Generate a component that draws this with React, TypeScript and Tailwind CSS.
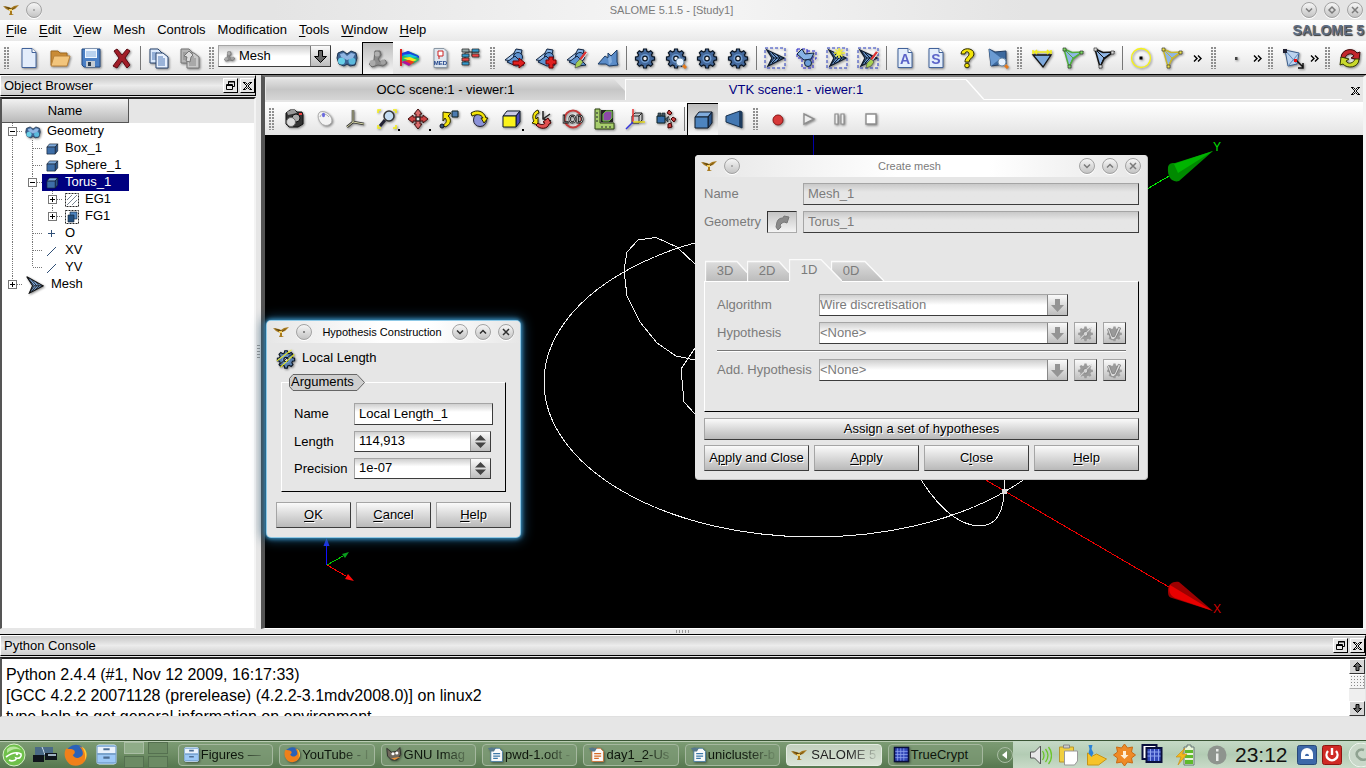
import React from "react";

type Kids = { children?: React.ReactNode };

/* ---------- shared drawing pieces ---------- */

const GEAR =
  "M9.6 2h2.8l.5 2.4 1.7.7 2.1-1.3 2 2-1.3 2.1.7 1.7 2.4.5v2.8l-2.4.5-.7 1.7 1.3 2.1-2 2-2.1-1.3-1.7.7-.5 2.4H9.600l-.5-2.400-1.700-.7-2.100 1.300-2-2 1.300-2.100-.7-1.700L1.500 12.900v-2.800l2.400-.5.7-1.700-1.300-2.100 2-2 2.100 1.300 1.700-.7z";

function Svg({ children, size = 22 }: Kids & { size?: number }) {
  return (
    <svg
      viewBox="0 0 22 22"
      width={size}
      height={size}
      aria-hidden="true"
      className="block shrink-0 drop-shadow-[1px_1px_1px_rgba(0,0,0,0.45)]"
    >
      {children}
    </svg>
  );
}

const Gear = ({ fill = "#44699c", stroke = "#0b1624" }: { fill?: string; stroke?: string }) => (
  <>
    <path d={GEAR} fill={fill} stroke={stroke} strokeWidth="1.200" />
    <circle cx="11" cy="11.500" r="4.500" fill="#6f9bd0" />
    <circle cx="11" cy="11.500" r="2.300" fill="#ececec" stroke={stroke} strokeWidth="1.200" />
  </>
);

const Pages = ({ dim = false }: { dim?: boolean }) => (
  <>
    <path d="M2 2h8l4 4v10H2z" fill={dim ? "#b5b5b5" : "#dbe9fb"} stroke={dim ? "#777" : "#28456e"} />
    <path d="M4 6h5M4 8h6M4 10h6M4 12h6" stroke={dim ? "#888" : "#4c77b4"} />
    <path d="M8 6h7l5 4v11H8z" fill={dim ? "#c9c9c9" : "#e9f1fd"} stroke={dim ? "#777" : "#28456e"} />
    <path d="M10 10h5M10 12h7M10 14h7M10 16h7M10 18h7" stroke={dim ? "#888" : "#4c77b4"} />
  </>
);

const MeshShape = () => (
  <>
    <path d="M6 14L12 2l6 1-2 9z" fill="#86b2e4" stroke="#10233f" />
    <path d="M1 13l9-7v8z" fill="#a9c9ee" stroke="#10233f" />
    <circle cx="14" cy="10" r="4.500" fill="#5f93d0" stroke="#10233f" />
    <path d="M3 15l8-6 9 9-8 1z" fill="#5f93d0" stroke="#10233f" />
  </>
);

const Dashed = () => (
  <rect x="1" y="1" width="20" height="20" fill="none" stroke="#2a3fc0" strokeDasharray="3 2" />
);

const DartMesh = () => (
  <>
    <Dashed />
    <path d="M3 3l17 8-16 8 4-8z" fill="#6c98cf" stroke="#0d1a2c" strokeWidth="1.300" />
    <path d="M4 4l6 7h10M4 19l6-8M8 6l5 5-5 5M13 8l3 3-3 3" fill="none" stroke="#0d1a2c" />
  </>
);

const Tri = ({ line, dot }: { line: string; dot: string }) => (
  <>
    <path d="M2 2l8 3.500 10-.5-9 7-4 8z" fill="#8fb6e6" stroke={line} strokeWidth="1.500" />
    <path d="M2 2l9 9 9-6M11 11l-4 9" fill="none" stroke={line} />
    <path d="M1 1h3v3H1zM18 4h3v3h-3zM6 18h3v3H6z" fill={dot} stroke="#222" strokeWidth=".6" />
  </>
);

const Cube = ({ front, top = "#7fabdc", side = "#2b5488" }: { front: string; top?: string; side?: string }) => (
  <>
    <path d="M3 8l4-5h13l-4 5z" fill={top} stroke="#111c2c" />
    <path d="M16 8l4-5v11l-4 5z" fill={side} stroke="#111c2c" />
    <path d="M3 8h13v11H3z" fill={front} stroke="#111c2c" />
  </>
);

const Brush = () => (
  <>
    <path d="M20 5l-6 8" stroke="#d33" strokeWidth="2.500" />
    <path d="M21 6l-6 8" stroke="#eee" />
    <path d="M14 12l3 3-3 4-5 2 1-5z" fill="#a6cf52" stroke="#444" strokeWidth=".6" />
  </>
);

const Lens = () => (
  <>
    <path d="M17 17l4 4" stroke="#e57a1c" strokeWidth="3" />
    <circle cx="15" cy="15" r="4" fill="#e6f2ff" stroke="#6c8ba8" />
  </>
);

const Doc = ({ letter }: { letter?: string }) => (
  <>
    <path d="M4 1.500h10l4 4v15H4z" fill="#e3edfb" stroke="#41629a" />
    <path d="M14 1.500v4h4" fill="#fff" stroke="#41629a" />
    {letter && (
      <text x="11" y="17" textAnchor="middle" fontSize="14" fontWeight="bold" fill="#5b63c8" fontFamily="Liberation Sans">
        {letter}
      </text>
    )}
  </>
);

const I: Record<string, React.ReactNode> = {
  newDoc: <Doc />,
  open: (
    <>
      <path d="M2 4h7l2 2h7v12H2z" fill="#c98b35" stroke="#a06a20" />
      <path d="M5 9h16l-3 10H2z" fill="#f2c57c" stroke="#b98138" />
    </>
  ),
  save: (
    <>
      <path d="M2 2h18v18H4l-2-2z" fill="#4a7fc4" stroke="#234b82" />
      <rect x="5" y="2" width="12" height="9" fill="#eef6ff" />
      <path d="M6 5h10M6 7h10M6 9h10" stroke="#83aee0" />
      <rect x="6" y="14" width="9" height="6" fill="#c3cbd3" />
      <rect x="8" y="15" width="3" height="4" fill="#2a3c50" />
    </>
  ),
  del: <path d="M3 4l3-2 5 6 5-6 3 2-5 7 5 7-3 3-5-7-5 7-4-2 6-8z" fill="#a11d28" stroke="#5b0a12" />,
  copy: <Pages />,
  paste: (
    <>
      <Pages dim />
      <path d="M5 9l5-5 4 4-2 2-1 5-4-1 1-4z" fill="#ddd" stroke="#777" />
    </>
  ),
  geom: (
    <>
      <path d="M2 6l5-2 4 3 4-3 5 2 1 5-2 7-5 1-3-2-3 2-5-2-2-6z" fill="#3d6494" stroke="#1d3450" />
      <circle cx="5.500" cy="14" r="3.500" fill="#69d0e8" />
      <circle cx="16" cy="14" r="3.500" fill="#5bb9dc" />
      <path d="M4 7l4-1 3 3 4-3 4 1-2 4-6 2-6-3z" fill="#8fb5e2" />
    </>
  ),
  meshMod: (
    <>
      <path d="M8 3h5l1 4-3 4 2 3 5-2 2 3-4 3-5-1-6 2-3-3 5-4z" fill="#8c8c8c" stroke="#6a6a6a" />
      <circle cx="5.500" cy="15" r="3" fill="#aaa" />
      <circle cx="16" cy="14" r="2.500" fill="#a2a2a2" />
      <circle cx="10" cy="6" r="2.500" fill="#b0b0b0" />
    </>
  ),
  post: (
    <>
      <path d="M3 2v17" stroke="#d22" strokeWidth="2" />
      <path d="M4 8l6-4 10 4 1 5-6 4-11-3z" fill="#20b96e" />
      <path d="M4 6l6-2 11 5v2L12 8 4 9z" fill="#1b3fe0" />
      <path d="M4 8l8-1 8 3-7 1z" fill="#13c7d8" />
      <path d="M5 11l7-1 7 3-5 2z" fill="#f5e81c" />
      <path d="M5 14l6-1 6 2-5 3z" fill="#ed3b1c" />
      <path d="M3 15l4-1 6 3-2 2z" fill="#b0119c" />
    </>
  ),
  med: (
    <>
      <path d="M5 1.500h10l3 3v16H5z" fill="#dfe7ef" stroke="#8b98a5" />
      <path d="M9 4h5v5H9z" fill="#fff" stroke="#c22" />
      <path d="M10 9v3" stroke="#c22" />
      <text x="11.500" y="18" textAnchor="middle" fontSize="6" fontWeight="bold" fill="#1c3f87" fontFamily="Liberation Sans">
        MED
      </text>
    </>
  ),
  tree: (
    <>
      <path d="M5 5h14M12 5v4h5M5 6v12" stroke="#222" fill="none" />
      <path d="M2 2h7v3H2z" fill="#9aa" stroke="#222" strokeWidth=".7" />
      <path d="M12 2h7v3h-7z" fill="#39c" stroke="#222" strokeWidth=".7" />
      <path d="M12 7h7v3h-7z" fill="#e44" stroke="#222" strokeWidth=".7" />
      <path d="M2 7h7v3H2z" fill="#39c" stroke="#222" strokeWidth=".7" />
      <path d="M2 11h7v3H2z" fill="#e44" stroke="#222" strokeWidth=".7" />
      <path d="M2 15h7v3H2z" fill="#39c" stroke="#222" strokeWidth=".7" />
    </>
  ),
  meshNew: (
    <>
      <MeshShape />
      <path d="M9 14h6v-3l6 5-6 5v-3H9z" fill="#e02020" stroke="#700" />
    </>
  ),
  meshAdd: (
    <>
      <MeshShape />
      <path d="M14 10h4v3h3v4h-3v4h-4v-4h-3v-4h3z" fill="#e02020" stroke="#700" />
    </>
  ),
  meshEdit: (
    <>
      <MeshShape />
      <Brush />
    </>
  ),
  meshCopy: (
    <>
      <path d="M1 17l7-8 3 2V6l3 3 6-6v12l1 3-9 1-3-2z" fill="#5b8cc8" stroke="#1c3c66" />
      <path d="M11 11l3-2 1 6-3 3z" fill="#85aedd" />
    </>
  ),
  gear: <Gear />,
  gearLens: (
    <>
      <Gear />
      <Lens />
    </>
  ),
  grp: <DartMesh />,
  grpMulti: (
    <>
      <path d="M2 2h10v9H2zM7 9h11v12H7zM12 4h9v8h-9z" fill="none" stroke="#2222cc" strokeDasharray="3 2" />
      <path d="M2 7l5-5 3 5 9-1-3 6-7 1z" fill="#86b2e4" stroke="#10233f" />
      <circle cx="13" cy="16" r="3.500" fill="#6d9ed8" stroke="#10233f" />
    </>
  ),
  grpNew: (
    <>
      <DartMesh />
      <path d="M13 1v10M8 6h11M9.500 2.500l7 7M16.500 2.500l-7 7" stroke="#f4f03a" strokeWidth="1.500" />
    </>
  ),
  grpEdit: (
    <>
      <DartMesh />
      <Brush />
    </>
  ),
  docA: <Doc letter="A" />,
  docS: <Doc letter="S" />,
  help: (
    <>
      <path d="M5 7c0-7 13-7 13 0 0 4-5 4-5 8H9c0-5 4-5 4-8 0-3-4-3-4 0z" fill="#f4e409" stroke="#2c2a00" />
      <circle cx="11" cy="18.500" r="2.300" fill="#f4e409" stroke="#2c2a00" />
    </>
  ),
  search: (
    <>
      <path d="M2 2l6 3 11-1v13l-15 2z" fill="#3d6a9f" stroke="#203c62" />
      <path d="M2 2l12 9-10 8z" fill="#6b9bd2" />
      <Lens />
    </>
  ),
  length: (
    <>
      <path d="M2 8h18l-8 12z" fill="#7ea9dd" stroke="#111" strokeWidth="1.300" />
      <path d="M2 3v4M20 3v4M2 5h18M6 3l-2 2 2 2M16 3l2 2-2 2" stroke="#f2ee1c" fill="none" strokeWidth="1.500" />
    </>
  ),
  triGreen: <Tri line="#4fae3c" dot="#7bdc60" />,
  triBlack: <Tri line="#111" dot="#ddd" />,
  node: (
    <>
      <circle cx="11" cy="11" r="9.500" fill="none" stroke="#f5f21a" strokeWidth="1.300" />
      <path d="M9.500 9.500h3v3h-3z" fill="#000" />
    </>
  ),
  triYellow: <Tri line="#c9b72c" dot="#f0e34c" />,
  dot: <path d="M10 10h2.500v3H10z" fill="#444" />,
  move: (
    <>
      <path d="M3 3l14 3-2 11-9 2z" fill="#bcd3ee" stroke="#3b5d8a" />
      <path d="M3 3l12 14M17 6L6 19" stroke="#5d86b8" />
      <path d="M1 2h4v4H1z" fill="#223" />
      <path d="M14 13l7 7M21 16v5h-5" stroke="#111" fill="none" strokeWidth="1.500" />
      <path d="M12 12h3v3h-3z" fill="#e11" />
    </>
  ),
  refresh: (
    <>
      <path d="M2 11c0-9 12-11 16-5l3-1-1 8-8-2 3-2c-2-4-8-2-9 2z" fill="#c2262b" stroke="#3d0808" />
      <path d="M20 12c0 9-12 10-16 5l-3 1 1-8 8 2-3 2c2 4 8 2 9-2z" fill="#c9d92c" stroke="#343a05" />
    </>
  ),
  camera: (
    <>
      <path d="M3 5l4-3h5l2 2h5l1 3v9l-5 3H6l-3-3z" fill="#333" stroke="#111" />
      <path d="M4 4l4-2h4l2 3-9 2z" fill="#999" />
      <circle cx="13" cy="10" r="4" fill="#aaa" stroke="#111" />
      <circle cx="8" cy="14" r="4.500" fill="#dcdcdc" stroke="#666" />
      <path d="M16 5h3v2h-3z" fill="#e44" />
    </>
  ),
  mouse: (
    <>
      <path d="M6 4c5-2 12 3 12 9-1 5-8 6-11 2C4 12 3 6 6 4z" fill="#f3f3f3" stroke="#aaa" />
      <path d="M6 9c1-4 6-4 9 0" fill="none" stroke="#aaa" />
      <ellipse cx="9.500" cy="7" rx="1.500" ry="2.200" fill="#6a6ae0" />
    </>
  ),
  triad: (
    <>
      <path d="M8 2v12l11 2M8 14l-6 5" stroke="#333" strokeWidth="2.500" fill="none" />
      <path d="M8 2v12l11 2M8 14l-6 5" stroke="#d8d8a8" fill="none" />
    </>
  ),
  zoomFit: (
    <>
      <path d="M2 5V2h3M17 2h3v3M2 17v3h3M17 20h3v-3" fill="none" stroke="#f3ee16" strokeWidth="1.500" />
      <path d="M9 12l-5 6" stroke="#223" strokeWidth="3" />
      <circle cx="13" cy="8" r="5" fill="#c4dcf2" stroke="#333" strokeWidth="1.500" />
    </>
  ),
  pan: (
    <>
      <path d="M11 1l4 5h-2v3H9V6H7zM11 21l4-5h-2v-3H9v3H7z" fill="#d86a6a" stroke="#401010" />
      <path d="M1 11l5-4v2h3v4H6v2zM21 11l-5-4v2h-3v4h3v2z" fill="#c44" stroke="#401010" />
      <circle cx="11" cy="11" r="2" fill="#eee" stroke="#222" />
    </>
  ),
  rotPoint: (
    <>
      <path d="M14 3h6v6h-6z" fill="#4a7ab0" stroke="#122" />
      <path d="M5 4l8 1-3 3c4 3 3 9-3 11l-2-2c4-2 4-5 2-7l-2 3z" fill="#f4e409" stroke="#2c2a00" />
      <circle cx="4" cy="18" r="2" fill="#357" stroke="#112" />
    </>
  ),
  rotate: (
    <>
      <circle cx="11" cy="12" r="6.500" fill="#8b92d8" stroke="#223" />
      <path d="M2 5c6-4 13-2 15 5h2l-4 5-3-5h2C12 6 8 6 3 8z" fill="#f4e409" stroke="#2c2a00" />
    </>
  ),
  yellowCube: <Cube front="#fbf31b" top="#c8c8e6" side="#4a4ab8" />,
  turn: (
    <>
      <path d="M12 3v8l8 2M12 11l7-5" stroke="#222" strokeWidth="1.500" fill="none" />
      <path d="M7 2C1 4 1 10 3 13l-2 2 6 2V9L5 11C4 8 5 6 8 5z" fill="#f4e409" stroke="#2c2a00" />
      <path d="M5 17c4 5 12 4 13-1l2-1-3-5-5 4 2 1c-1 2-5 2-7 0z" fill="#e05050" stroke="#400" />
    </>
  ),
  lod: (
    <>
      <circle cx="11" cy="11" r="8.500" fill="none" stroke="#c43b3b" strokeWidth="2" />
      <text x="11" y="15" textAnchor="middle" fontSize="10" fontWeight="bold" fill="#fff" stroke="#111" strokeWidth=".8" fontFamily="Liberation Sans">
        LOD
      </text>
    </>
  ),
  ruler: (
    <>
      <path d="M2 1h5v14h14v6H2z" fill="#a7cd6c" stroke="#2c4312" />
      <path d="M8 2h12v12H8z" fill="#222" />
      <path d="M10 6l3-3h6v7l-3 3h-6z" fill="#8b4aa8" stroke="#6c3" />
      <path d="M3 5h2M3 9h2M3 13h2M9 18v2M13 18v2M17 18v2" stroke="#223" />
    </>
  ),
  axes: (
    <>
      <path d="M8 8l3-3h7v7l-3 3H8z" fill="#ccc" stroke="#222" />
      <path d="M8 8h7v7M15 8l3-3" stroke="#222" fill="none" />
      <path d="M9 1v13" stroke="#e33" strokeWidth="1.500" />
      <path d="M9 14h12" stroke="#e6d91a" strokeWidth="1.500" />
      <path d="M9 14l-7 7" stroke="#33d" strokeWidth="1.500" />
    </>
  ),
  cam2: (
    <>
      <path d="M2 8h8v7H2z" fill="#356ca8" stroke="#122" />
      <path d="M3 5h3v3H3zM7 5h3v3H7zM10 11l3-2v5z" fill="#456" stroke="#122" strokeWidth=".6" />
      <path d="M14 2l3 3-2 2-3-2zM18 9l3 2-2 3-3-3zM13 16l3-1 1 4-4 1z" fill="#c44" stroke="#400" />
      <path d="M13 8l4 8" stroke="#222" strokeDasharray="2 1" />
    </>
  ),
  blueCube: <Cube front="#4d84bf" />,
  persp: (
    <>
      <path d="M3 8l14-5v16L3 14z" fill="#4478b2" stroke="#16304e" />
      <path d="M17 3l2 1v16l-2-1z" fill="#24466e" stroke="#16304e" />
    </>
  ),
  record: <circle cx="11" cy="12" r="5" fill="#d73939" stroke="#8b1616" />,
  play: <path d="M6 6l10 5-10 5z" fill="#eee" stroke="#8e8e8e" strokeWidth="1.400" />,
  pause: <path d="M6 6h3v10H6zM12 6h3v10h-3z" fill="#eee" stroke="#8e8e8e" strokeWidth="1.200" />,
  stop: <path d="M6 6h10v10H6z" fill="#fff" stroke="#8e8e8e" strokeWidth="1.400" />,
};

const Eagle = () => (
  <svg viewBox="0 0 16 16" width="16" height="16" aria-hidden="true" className="block shrink-0">
    <path d="M0 4l6 1 2 1 3-2 5-1-4 4-3 1v4l2 1H6l1-2V9L3 7z" fill="#a87a1e" />
    <path d="M1 4l6 2 2 1 5-3-5 4H7z" fill="#5b430f" />
    <path d="M6 7h3v2H6z" fill="#f1ce62" />
  </svg>
);

/* ---------- small controls ---------- */

function RoundBtn({ kind, dim }: { kind: "dot" | "down" | "up" | "max" | "close"; dim?: boolean }) {
  const c = dim ? "#7b7b7b" : "#2e2e2e";
  return (
    <button
      type="button"
      aria-label={kind}
      className="flex size-4 shrink-0 items-center justify-center rounded-full border border-[#a2a2a2] bg-linear-to-b from-[#f6f6f6] to-[#c4c4c4] shadow-[0_1px_0_#fff]"
    >
      <svg viewBox="0 0 10 10" width="10" height="10" fill="none" stroke={c} strokeWidth="1.500" aria-hidden="true">
        {kind === "dot" && <circle cx="5" cy="5" r=".5" strokeWidth=".8" />}
        {kind === "down" && <path d="M2 3.500l3 3 3-3" />}
        {kind === "up" && <path d="M2 6.500l3-3 3 3" />}
        {kind === "max" && <path d="M5 2l3 3-3 3-3-3z" />}
        {kind === "close" && <path d="M2 2l6 6M8 2l-6 6" />}
      </svg>
    </button>
  );
}

const Grip = () => (
  <div className="flex w-[13px] shrink-0 justify-center gap-px py-1">
    <div className="my-px w-0.5 bg-[repeating-linear-gradient(#8f8f8f_0_2px,transparent_2px_3px)]" />
    <div className="my-px w-0.5 bg-[repeating-linear-gradient(#8f8f8f_0_2px,transparent_2px_3px)]" />
  </div>
);

const Sep = () => (
  <div className="flex w-1.5 shrink-0 justify-center py-1">
    <div className="w-px bg-[#777]" />
  </div>
);

function Tool({ name, on, drop }: { name: string; on?: boolean; drop?: boolean }) {
  return (
    <button
      type="button"
      aria-label={name}
      className={
        on
          ? "relative flex w-[31px] shrink-0 items-center justify-center border-t border-l border-black bg-linear-to-b from-[#bdbdbd] to-[#f6f6f6]"
          : "relative flex w-[31px] shrink-0 items-center justify-center"
      }
    >
      <Svg>{I[name]}</Svg>
      {drop && <span className="absolute right-0.5 bottom-1 size-0.5 bg-black" />}
    </button>
  );
}

const Tools = ({ names }: { names: string[] }) => (
  <>
    {names.map((n, i) => (
      <Tool key={i} name={n} drop={["zoomFit", "pan", "yellowCube"].includes(n)} />
    ))}
  </>
);

const More = ({ wide }: { wide?: boolean }) => (
  <button
    type="button"
    aria-label="More tools"
    className={
      wide
        ? "flex w-5 shrink-0 items-center justify-center"
        : "flex w-[13px] shrink-0 items-center justify-center"
    }
  >
    <svg viewBox="0 0 9 7" width="9" height="7" fill="none" stroke="#000" strokeWidth="1.400" aria-hidden="true">
      <path d="M1 .5l3 3-3 3M5 .5l3 3-3 3" />
    </svg>
  </button>
);

const DockBtn = ({ kind, flat }: { kind: "float" | "close"; flat?: boolean }) => (
  <button
    type="button"
    aria-label={kind}
    className={
      flat
        ? "flex size-[15px] items-center justify-center"
        : "flex size-[15px] items-center justify-center border border-t-white border-r-black border-b-black border-l-white bg-[#e6e6e6]"
    }
  >
    <svg viewBox="0 0 11 11" width="11" height="11" fill="none" stroke="#000" className="shrink-0" aria-hidden="true">
      {kind === "float" ? (
        <path d="M3.500 4V1.500h6v5H7.500M3 2h7M1.500 4.500h6v5h-6zM1 5.500h7" />
      ) : (
        <path d="M1 2.500h2.500l2 2 2-2H10M1 9.500h2.500l2-2 2 2H10M2 3l3 3-3 3M9 3L6 6l3 3" />
      )}
    </svg>
  </button>
);

function DockHeader({ title }: { title: string }) {
  return (
    <div className="flex h-[21px] shrink-0 items-center gap-0.5 border border-t-white border-r-black border-b-black border-l-white bg-linear-to-b from-[#c6c6c6] via-[#ececec] to-[#cdcdcd] pl-[3px]">
      <h2 className="grow">{title}</h2>
      <DockBtn kind="float" />
      <DockBtn kind="close" />
    </div>
  );
}

const K = ({ children }: Kids) => <span className="underline underline-offset-2">{children}</span>;

function Push({ children, grow }: Kids & { grow?: boolean }) {
  return (
    <button
      type="button"
      className={
        grow
          ? "h-[26px] flex-1 border border-t-[#a5a5a5] border-r-[#3c3c3c] border-b-[#3c3c3c] border-l-[#a5a5a5] bg-linear-to-b from-[#fafafa] to-[#b9b9b9] whitespace-nowrap [text-shadow:1px_1px_0_#fff]"
          : "h-[22px] border border-t-[#a5a5a5] border-r-[#3c3c3c] border-b-[#3c3c3c] border-l-[#a5a5a5] bg-linear-to-b from-[#fafafa] to-[#b9b9b9] whitespace-nowrap [text-shadow:1px_1px_0_#fff]"
      }
    >
      {children}
    </button>
  );
}

/* ---------- tree ---------- */

type Row = { label: string; guides: string[]; icon: React.ReactNode; pad: string; sel?: boolean };

function Guide({ kind }: { kind: string }) {
  const up = kind.includes("u");
  const down = kind.includes("d");
  const right = kind.includes("r");
  const box = kind.includes("+") || kind.includes("-");
  return (
    <svg width="20" height="17" viewBox="0 0 20 17" className="block shrink-0" aria-hidden="true">
      <g stroke="#777" strokeDasharray="1 1">
        {up && <path d="M10.500 0v8" />}
        {down && <path d="M10.500 8v9" />}
        {right && <path d="M11 8.500h9" />}
      </g>
      {box && (
        <>
          <rect x="6.500" y="4.500" width="8" height="8" fill="#fff" stroke="#777" />
          <path d={kind.includes("+") ? "M8 8.500h5M10.500 6v5" : "M8 8.500h5"} stroke="#000" />
        </>
      )}
    </svg>
  );
}

const SmallCube = (
  <svg viewBox="0 0 22 22" width="14" height="14" aria-hidden="true" className="block shrink-0">
    <Cube front="#3d6ea8" />
  </svg>
);
const LineIcon = (
  <svg viewBox="0 0 14 14" width="14" height="14" aria-hidden="true" className="block shrink-0">
    <path d="M2 12l9-9" stroke="#2f4f77" />
  </svg>
);

const ROWS: Row[] = [
  { label: "Geometry", guides: ["ud-r"], icon: <Svg size={16}>{I.geom}</Svg>, pad: "w-[25px] pl-[3px]" },
  { label: "Box_1", guides: ["ud", "udr"], icon: SmallCube, pad: "w-[23px] pl-[3px]" },
  { label: "Sphere_1", guides: ["ud", "udr"], icon: SmallCube, pad: "w-[23px] pl-[3px]" },
  { label: "Torus_1", guides: ["ud", "ud-r"], icon: SmallCube, pad: "w-[23px] pl-[3px]", sel: true },
  {
    label: "EG1",
    guides: ["ud", "ud", "ud+r"],
    icon: (
      <svg viewBox="0 0 14 14" width="14" height="14" aria-hidden="true" className="block shrink-0">
        <rect x=".5" y=".5" width="13" height="13" fill="#fff" stroke="#222" strokeDasharray="2 1" />
        <path d="M2 7l5-5M2 12L12 2M7 12l5-5" stroke="#567" strokeWidth=".8" />
      </svg>
    ),
    pad: "w-[23px] pl-[3px]",
  },
  {
    label: "FG1",
    guides: ["ud", "ud", "u+r"],
    icon: (
      <svg viewBox="0 0 14 14" width="14" height="14" aria-hidden="true" className="block shrink-0">
        <rect x=".5" y=".5" width="13" height="13" fill="#fff" stroke="#222" strokeDasharray="2 1" />
        <path d="M5 2h7v7H5z" fill="#4d84bf" stroke="#123" strokeWidth=".6" />
        <path d="M3 5h6v7H3z" fill="#24507f" stroke="#123" strokeWidth=".6" />
      </svg>
    ),
    pad: "w-[23px] pl-[3px]",
  },
  {
    label: "O",
    guides: ["ud", "udr"],
    icon: (
      <svg viewBox="0 0 14 14" width="14" height="14" aria-hidden="true" className="block shrink-0">
        <path d="M3 6.500h7M6.500 3v7" stroke="#2f4f77" />
      </svg>
    ),
    pad: "w-[23px] pl-[3px]",
  },
  { label: "XV", guides: ["ud", "udr"], icon: LineIcon, pad: "w-[23px] pl-[3px]" },
  { label: "YV", guides: ["ud", "ur"], icon: LineIcon, pad: "w-[23px] pl-[3px]" },
  {
    label: "Mesh",
    guides: ["u+r"],
    icon: (
      <Svg size={18}>
        <path d="M1 1l20 11L4 21l4-9z" fill="#7fa9dc" stroke="#111" strokeWidth="1.300" />
        <path d="M1 1l9 11h11M4 21l6-9M7 5l6 7-6 7M12 7l4 5-5 5" fill="none" stroke="#111" />
      </Svg>
    ),
    pad: "w-[29px] pl-1",
  },
];

function ObjectBrowser() {
  return (
    <section className="flex w-64 shrink-0 flex-col">
      <DockHeader title="Object Browser" />
      <div className="mt-px flex min-h-0 grow flex-col border-t-2 border-r-2 border-b border-l-2 border-t-[#222] border-r-[#f4f4f4] border-b-[#e6e6e6] border-l-[#555] bg-white">
        <div className="flex h-6 shrink-0 bg-[#e6e6e6]">
          <div className="flex w-[127px] items-center justify-center border-r border-b border-[#555] bg-linear-to-b from-[#f2f2f2] to-[#b9b9b9]">
            Name
          </div>
        </div>
        <ul>
          {ROWS.map((r) => (
            <li key={r.label} className="flex h-[17px] w-[127px] items-center">
              {r.guides.map((g, i) => (
                <Guide key={i} kind={g} />
              ))}
              <div className={r.sel ? "flex h-full grow items-center bg-[#000080] text-white" : "flex h-full grow items-center"}>
                <span className={r.pad}>{r.icon}</span>
                <span className="pb-0.5">{r.label}</span>
              </div>
            </li>
          ))}
        </ul>
      </div>
    </section>
  );
}

/* ---------- 3D scene ---------- */

function Scene() {
  return (
    <svg className="absolute inset-0 size-full" aria-hidden="true">
      <g transform="translate(-265 -135)" fill="none" shapeRendering="crispEdges">
        <g stroke="#f2f2f2">
          <ellipse cx="814" cy="382" rx="270" ry="155" />
          <path d="M700 268l-5-4-18-17-21-9.500-18 2.500-11 12-3 18 3 26 13 26 17 21 19 13 24 5" />
          <path d="M705 336l-10 12-14 21 3 33 11 12 10 8" />
          <path d="M915 470c14 24 30 43 46 51 12 6 25 7 33 0 8-7 11-20 10-41" />
        </g>
        <path d="M813.500 135v30" stroke="#0000a8" />
        <path d="M960 465l214 125" stroke="#f00000" />
        <path d="M1130 199l46-27" stroke="#00f000" />
        <path d="M326.500 565v-24" stroke="#1010ff" />
        <path d="M327 565l16-9" stroke="#00c800" />
        <path d="M327 565l19 11" stroke="#ff0000" />
      </g>
      <g transform="translate(-265 -135)">
        <path d="M323.500 546l3-8 3 8z" fill="#2030ff" />
        <path d="M342 554l7-2-4 6z" fill="#0a9c1e" />
        <path d="M345 579l3-5 6 7z" fill="#ff0808" />
        <path d="M1168 167c1-4 4-4 7-4l38-12-34 30c-7 2-12-4-11-14z" fill="#008a00" />
        <path d="M1174 164l39-13-35 22z" fill="#00b400" />
        <path d="M1168 590c0-6 5-9 11-8l34 29-41-13c-4-1-4-4-4-8z" fill="#9c0000" />
        <path d="M1170 585l43 26-38-13c-5-2-7-8-5-13z" fill="#e80000" />
        <path d="M1002 489h5v5h-5z" fill="#ddd" />
        <g fontFamily="Liberation Sans" fontSize="12">
          <text x="1213" y="151" fill="#00e000">
            Y
          </text>
          <text x="1213" y="613" fill="#d00000">
            X
          </text>
        </g>
      </g>
    </svg>
  );
}

/* ---------- dialogs ---------- */

function DialogTitle({ title, dim }: { title: string; dim?: boolean }) {
  return (
    <header className="flex h-[22px] items-center gap-[7px] rounded-t bg-[linear-gradient(90deg,#e6e6e6,#fff_45%,#fff_65%,#e6e6e6)] px-1.5 text-[11px]">
      <Eagle />
      <RoundBtn kind="dot" dim={dim} />
      <h2 className={dim ? "grow text-center text-[#7b7b7b]" : "grow text-center"}>{title}</h2>
      <RoundBtn kind="down" dim={dim} />
      <RoundBtn kind="up" dim={dim} />
      <RoundBtn kind="close" dim={dim} />
    </header>
  );
}

function Combo({ id, value }: { id: string; value: string }) {
  return (
    <div className="relative flex h-[22px] w-[249px] shrink-0 border border-t-[#a5a5a5] border-r-[#3c3c3c] border-b-[#3c3c3c] border-l-[#a5a5a5] bg-linear-to-b from-[#cfcfcf] to-white to-50%">
      <select id={id} disabled className="size-full appearance-none text-[#7b7b7b] opacity-100">
        <option>{value}</option>
      </select>
      <div className="pointer-events-none absolute inset-y-0 right-0 flex w-5 items-center justify-center border-l border-[#888] bg-linear-to-b from-[#fafafa] to-[#bdbdbd]">
        <svg viewBox="0 0 13 13" width="13" height="13" aria-hidden="true">
          <path d="M4 0h5v6h4L6.500 13 0 6h4z" fill="#949494" />
        </svg>
      </div>
    </div>
  );
}

const GrayTool = ({ name, brush }: { name: string; brush?: boolean }) => (
  <button
    type="button"
    disabled
    aria-label={name}
    className="flex h-[22px] w-[23px] shrink-0 items-center justify-center border border-t-[#a5a5a5] border-r-[#3c3c3c] border-b-[#3c3c3c] border-l-[#a5a5a5] bg-linear-to-b from-[#fafafa] to-[#bdbdbd]"
  >
    <svg viewBox="0 0 22 22" width="17" height="17" aria-hidden="true">
      <path d={GEAR} fill="#9a9a9a" />
      {brush ? (
        <path d="M4 4l4 11h3l5-12 3 1-6 12-3 3H7L2 6z" fill="#dcdcdc" stroke="#777" />
      ) : (
        <>
          <circle cx="11" cy="11.500" r="3" fill="#d8d8d8" stroke="#777" />
          <path d="M3 19L19 3" stroke="#d4d4d4" strokeWidth="1.500" />
        </>
      )}
    </svg>
  </button>
);

const TAB_SHAPES = {
  plain: { w: 42, fill: "M0 2h32l10 11v9H0z", line: "M.5 22V2.500h31.500l10 11" },
  active: { w: 53, fill: "M0 0h32l21 22v1H0z", line: "M.5 22V.5H32L53 22" },
  last: { w: 54, fill: "M0 2h34l19 20H0z", line: "M.5 22V2.500h33.500L53 22" },
};

function DTab({ label, shape }: { label: string; shape: "plain" | "active" | "last" }) {
  const s = TAB_SHAPES[shape];
  const on = shape === "active";
  return (
    <button
      type="button"
      role="tab"
      aria-selected={on}
      className={
        on
          ? "relative z-10 -mb-px flex h-[23px] w-[42px] items-center pr-0.5 pb-0.5"
          : "relative flex h-[22px] w-[42px] items-center pt-px pr-0.5"
      }
    >
      <svg width={s.w} height="23" viewBox={`0 0 ${s.w} 23`} className="absolute top-0 left-0" aria-hidden="true">
        <defs>
          <linearGradient id="tabgray" x1="0" y1="0" x2="0" y2="1">
            <stop offset="0" stopColor="#dedede" />
            <stop offset="1" stopColor="#bcbcbc" />
          </linearGradient>
        </defs>
        <path d={s.fill} fill={on ? "#e6e6e6" : "url(#tabgray)"} />
        <path d={s.line} fill="none" stroke="#fbfbfb" strokeWidth="1.300" />
      </svg>
      <span className="relative w-full text-center">{label}</span>
    </button>
  );
}

const ROField = ({ id, value }: { id: string; value: string }) => (
  <input
    id={id}
    readOnly
    defaultValue={value}
    className="h-[22px] min-w-0 grow border border-t-[#a5a5a5] border-r-[#3c3c3c] border-b-[#3c3c3c] border-l-[#a5a5a5] bg-linear-to-b from-[#c9c9c9] to-[#e6e6e6] to-40% px-1 pb-0.5"
  />
);

function CreateMesh() {
  return (
    <section className="absolute top-5 left-[430px] flex w-[453px] flex-col rounded border-r border-b border-[#c4c4c4] bg-[#e6e6e6] text-[#7b7b7b]">
      <DialogTitle title="Create mesh" dim />
      <div className="flex flex-col pt-1.5 pr-2 pb-2 pl-[9px]">
        <div className="flex items-center">
          <label htmlFor="mesh-name" className="w-[99px]">
            Name
          </label>
          <ROField id="mesh-name" value="Mesh_1" />
        </div>
        <div className="mt-1.5 flex items-center">
          <div className="flex w-[99px] items-center justify-between pr-1.5">
            <label htmlFor="mesh-geom">Geometry</label>
            <button
              type="button"
              aria-label="Select geometry"
              className="flex h-[22px] w-[30px] items-center justify-center border border-t-[#333] border-r-[#aaa] border-b-[#aaa] border-l-[#333] bg-linear-to-b from-[#c4c4c4] to-[#f4f4f4]"
            >
              <svg viewBox="0 0 16 16" width="16" height="16" aria-hidden="true">
                <path d="M3 8c1-3 3-4 6-4l1-2 5 1-2 6-3-1-2 1-2 2 1 2-3 3-2-3z" fill="#8a8a8a" stroke="#777" />
              </svg>
            </button>
          </div>
          <ROField id="mesh-geom" value="Torus_1" />
        </div>
        <div role="tablist" className="mt-[26px] flex items-end pl-px">
          <DTab label="3D" shape="plain" />
          <DTab label="2D" shape="plain" />
          <DTab label="1D" shape="active" />
          <DTab label="0D" shape="last" />
        </div>
        <div className="flex flex-col border border-t-white border-r-black border-b-black border-l-white px-3 pt-3 pb-[30px]">
          <div className="flex items-center">
            <label htmlFor="algo" className="w-[102px]">
              Algorithm
            </label>
            <Combo id="algo" value="Wire discretisation" />
          </div>
          <div className="mt-1.5 flex items-center gap-1.5">
            <label htmlFor="hyp" className="w-24 shrink-0">
              Hypothesis
            </label>
            <Combo id="hyp" value="<None>" />
            <GrayTool name="Add hypothesis" />
            <GrayTool name="Edit hypothesis" brush />
          </div>
          <hr className="mt-1.5 mb-[7px] h-0.5 border-t border-b border-t-[#777] border-b-white" />
          <div className="flex items-center gap-1.5">
            <label htmlFor="addhyp" className="w-24 shrink-0 whitespace-nowrap">
              Add. Hypothesis
            </label>
            <Combo id="addhyp" value="<None>" />
            <GrayTool name="Add additional hypothesis" />
            <GrayTool name="Edit additional hypothesis" brush />
          </div>
        </div>
        <div className="mt-1.5 flex flex-col gap-[5px] text-black">
          <Push>Assign a set of hypotheses</Push>
          <div className="flex gap-[5px]">
            <Push grow>
              A<K>p</K>ply and Close
            </Push>
            <Push grow>
              <K>A</K>pply
            </Push>
            <Push grow>
              C<K>l</K>ose
            </Push>
            <Push grow>
              <K>H</K>elp
            </Push>
          </div>
        </div>
      </div>
    </section>
  );
}

function SpinRow({ id, label, value }: { id: string; label: string; value: string }) {
  return (
    <div className="flex items-center">
      <label htmlFor={id} className="w-[60px]">
        {label}
      </label>
      <div className="flex h-[21px] w-[137px] border border-t-[#a5a5a5] border-r-[#3c3c3c] border-b-[#3c3c3c] border-l-[#a5a5a5]">
        <input id={id} defaultValue={value} className="w-0 min-w-0 grow bg-linear-to-b from-[#cfcfcf] to-white to-40% px-1 pb-0.5" />
        <button
          type="button"
          aria-label={"Step " + label}
          className="flex w-5 shrink-0 items-center justify-center border-l border-[#999] bg-linear-to-b from-[#fafafa] to-[#bdbdbd]"
        >
          <svg viewBox="0 0 11 13" width="11" height="13" aria-hidden="true">
            <path d="M5.500 0L11 5.500H0zM0 7.500h11L5.500 13z" fill="#444" />
          </svg>
        </button>
      </div>
    </div>
  );
}

function Hypothesis() {
  return (
    <section className="absolute top-[186px] left-0.5 flex w-[253px] flex-col rounded bg-[#e6e6e6] shadow-[0_0_0_1px_#8fc9e6,0_0_4px_2px_#3d95c6,0_0_12px_3px_#174a6b]">
      <DialogTitle title="Hypothesis Construction" />
      <div className="flex flex-col px-[9px] pt-1.5 pb-[9px]">
        <div className="flex items-center gap-1.5">
          <Svg size={20}>
            <Gear fill="#5b80ad" />
            <path d="M1 13L17 1M5 20L20 6" stroke="#f1ee1d" strokeWidth="1.200" />
            <path d="M4 17L18 5" stroke="#111" />
          </Svg>
          <span className="pb-0.5">Local Length</span>
        </div>
        <div
          role="group"
          aria-labelledby="args-title"
          className="relative mx-[5px] mt-[13px] flex flex-col gap-1.5 border border-t-white border-r-black border-b-black border-l-white px-3 pt-5 pb-3"
        >
          <div className="absolute -top-[9px] left-[7px] flex h-[17px] w-[76px] items-center pl-0.5">
            <svg viewBox="0 0 76 17" width="76" height="17" className="absolute inset-0" aria-hidden="true">
              <path d="M4 .5h64l7.500 8-7.500 8H4l-3.500-4v-8z" fill="#cfcfcf" stroke="#666" />
            </svg>
            <span id="args-title" className="relative pb-0.5">
              Arguments
            </span>
          </div>
          <div className="flex items-center">
            <label htmlFor="hname" className="w-[60px]">
              Name
            </label>
            <input
              id="hname"
              defaultValue="Local Length_1"
              className="h-[22px] w-[139px] border border-t-[#a5a5a5] border-r-[#3c3c3c] border-b-[#3c3c3c] border-l-[#a5a5a5] bg-linear-to-b from-[#cfcfcf] to-white to-40% px-1 pb-0.5"
            />
          </div>
          <SpinRow id="hlen" label="Length" value="114,913" />
          <SpinRow id="hprec" label="Precision" value="1e-07" />
        </div>
        <div className="mt-2.5 flex gap-[5px]">
          <Push grow>
            <K>O</K>K
          </Push>
          <Push grow>
            <K>C</K>ancel
          </Push>
          <Push grow>
            <K>H</K>elp
          </Push>
        </div>
      </div>
    </section>
  );
}

/* ---------- viewer ---------- */

function Viewer() {
  return (
    <section className="flex min-w-0 grow flex-col border-t-2 border-r-3 border-b border-l-4 border-t-[#777] border-r-[#f4f4f4] border-b-white border-l-[#555]">
      <div className="flex h-[25px] shrink-0 items-start bg-[#e6e6e6] pt-0.5 pl-px">
        <button
          type="button"
          role="tab"
          aria-selected="false"
          className="h-[21px] w-[359px] bg-linear-to-b from-[#e2e2e2] via-[#c6c6c6] to-[#d6d6d6] [clip-path:polygon(0_0,348px_0,100%_12px,100%_100%,0_100%)]"
        >
          OCC scene:1 - viewer:1
        </button>
        <button
          type="button"
          role="tab"
          aria-selected="true"
          className="h-[21px] w-[341px] border-t border-l border-white text-[#000080]"
        >
          VTK scene:1 - viewer:1
        </button>
        <svg viewBox="0 0 18 21" width="18" height="21" aria-hidden="true">
          <path d="M0 .5L18 20.500" stroke="#fff" strokeWidth="1.500" />
        </svg>
        <div className="mr-1.5 flex grow self-start border-b border-white pt-5" />
        <div className="flex w-[15px] self-center">
          <DockBtn kind="close" flat />
        </div>
      </div>
      <div className="flex h-[33px] shrink-0 border-t border-white bg-linear-to-b from-white to-[#e4e4e4]">
        <Grip />
        <Tools
          names={["camera", "mouse", "triad", "zoomFit", "pan", "rotPoint", "rotate", "yellowCube", "turn", "lod", "ruler", "axes", "cam2"]}
        />
        <Sep />
        <Tool name="blueCube" on />
        <Tool name="persp" />
        <Grip />
        <Tools names={["record", "play", "pause", "stop"]} />
      </div>
      <div className="relative min-h-0 grow bg-black">
        <Scene />
        <CreateMesh />
        <Hypothesis />
      </div>
    </section>
  );
}

/* ---------- task bar ---------- */

const Fox = () => (
  <>
    <circle cx="11" cy="11" r="9.500" fill="#2b62b8" />
    <path d="M2 5c3 1 4 0 6 1 3 1 2 4 0 5 2 4 7 3 9 0 1-3-1-6-3-8 6 2 8 8 6 12-3 7-13 8-17 2-3-4-3-9-1-12z" fill="#f0801a" />
    <path d="M16 3c5 3 6 8 3 13 1-5 0-9-3-13z" fill="#ffc933" />
  </>
);
const Cabinet = () => (
  <>
    <rect x="2" y="2" width="18" height="18" rx="2" fill="#5fa8ee" stroke="#e8f3ff" />
    <path d="M2 3h18v7H2z" fill="#e9f2fc" stroke="#7aa3cc" />
    <path d="M2 11h18v8H2z" fill="#9cc8f6" stroke="#7aa3cc" />
    <path d="M8 5h6v2H8zM8 13h6v2H8z" fill="#4c6d92" />
  </>
);
const Odt = ({ c = "#3c78a8" }: { c?: string }) => (
  <>
    <path d="M5 3h11l4 4v13H5z" fill="#fafafa" stroke={c} />
    <path d="M8 10h9M8 13h9M8 16h6" stroke={c} strokeWidth="1.600" />
    <path d="M1 3l5-1 3 1 3-1-3 5H5z" fill="#56788c" />
  </>
);
const BlueGrid = () => (
  <>
    <path d="M2 2h18v18H2z" fill="#3348b8" stroke="#0a0f3c" strokeWidth="2" />
    <path d="M6 3v16M10 3v16M14 3v16M3 7h16M3 11h16M3 15h16" stroke="#8fa4f0" />
  </>
);

const TASKS: { text: string; icon: React.ReactNode; on?: boolean; full?: boolean }[] = [
  { text: "Figures —", icon: <Svg size={17}><Cabinet /></Svg> },
  { text: "YouTube - I", icon: <Svg size={17}><Fox /></Svg> },
  {
    text: "GNU Imag",
    icon: (
      <Svg size={17}>
        <path d="M1 3l6 5 6-1 5-5 1 9-5 7H7l-5-5z" fill="#6f685c" stroke="#222" />
        <circle cx="9" cy="10" r="2" fill="#fff" />
        <circle cx="14" cy="9" r="2" fill="#fff" />
        <path d="M7 16l12-2-8 4z" fill="#e8923a" />
      </Svg>
    ),
  },
  { text: "pwd-1.odt -", icon: <Svg size={17}><Odt /></Svg> },
  { text: "day1_2-Us", icon: <Svg size={17}><Odt c="#d86a24" /></Svg> },
  { text: "unicluster-b", icon: <Svg size={17}><Odt /></Svg> },
  { text: "SALOME 5", icon: <Eagle />, on: true },
  { text: "TrueCrypt", icon: <Svg size={17}><BlueGrid /></Svg>, full: true },
];

const TRAY: React.ReactNode[] = [
  <>
    <path d="M1 8h4l6-6v18l-6-6H1z" fill="#e8e8e8" stroke="#555" />
    <path d="M13 7c2 3 2 6 0 9M16 5c3 4 3 9 0 13M19 3c4 5 4 12 0 17" fill="none" stroke="#6cc62c" strokeWidth="1.300" />
  </>,
  <>
    <path d="M2 3h14v15H2z" fill="#f0cf3f" stroke="#b8962a" />
    <path d="M7 7h13v10l-3 4H7z" fill="#fff" stroke="#999" />
    <path d="M6 1h6v3H6z" fill="#ccc" stroke="#888" />
  </>,
  <>
    <path d="M2 9l5 3 4-2 10 5-8 6H2z" fill="#f6c32a" stroke="#c89414" />
    <path d="M3 1h4l-1 4 2 4-2 4-3-4 1-4z" fill="#2b83d8" />
  </>,
  <>
    <path
      d="M11 0l3 4 5-1-1 5 4 3-4 3 1 5-5-1-3 4-3-4-5 1 1-5-4-3 4-3-1-5 5 1z"
      fill="#ee8a27"
      stroke="#c96a13"
    />
    <path d="M9.500 7h3v4H15l-4 4-4-4h2.500z" fill="#fff0d8" />
  </>,
  <>
    <path d="M1 1h14v14H1z" fill="#fff" stroke="#0a0f3c" strokeWidth="2" />
    <path d="M5 4h15v14H5z" fill="#3348b8" stroke="#0a0f3c" strokeWidth="2" />
    <path d="M9 5v12M13 5v12M17 5v12M6 8h13M6 12h13" stroke="#8fa4f0" />
  </>,
];

function TaskBar() {
  return (
    <footer className="flex h-7 shrink-0 items-center border-t border-[#3a5535] bg-linear-to-b from-[#7d9c75] via-[#6d8d64] to-[#56774f] shadow-[inset_0_1px_0_#b9ccb3]">
      <div className="flex items-center gap-[7px] pl-0.5">
        <svg viewBox="0 0 24 24" width="24" height="24" aria-hidden="true">
          <circle cx="12" cy="12" r="11" fill="#6fc04b" stroke="#d7efc9" />
          <path d="M5 6c4-4 11-3 14 1-5-2-9-1-14 3z" fill="#b6e69c" />
          <path d="M4 14c4-3 10-6 15-3 1 3-2 5-5 4 1 2-4 4-7 2" fill="none" stroke="#fff" strokeWidth="1.600" />
          <circle cx="15" cy="11" r="1.300" fill="#fff" />
        </svg>
        <svg viewBox="0 0 24 22" width="24" height="22" aria-hidden="true">
          <path d="M2 3h18v9H2z" fill="#4a6a86" />
          <path d="M9 3c2 4 2 7 4 9" stroke="#cfe0ee" />
          <path d="M0 11h11v7H0zM12 9h12v7H12z" fill="#10161c" />
          <path d="M15 10h8v2h-8z" fill="#9fb2c0" />
        </svg>
        <svg viewBox="0 0 22 22" width="24" height="24" aria-hidden="true">
          <Fox />
        </svg>
        <svg viewBox="0 0 22 22" width="23" height="23" aria-hidden="true">
          <Cabinet />
        </svg>
      </div>
      <div className="ml-1.5 grid grid-cols-2 gap-x-1 gap-y-0.5">
        <span className="h-3 w-5 border border-[#a9bda4] bg-[#8fac88]" />
        <span className="h-3 w-5 border border-[#557050] bg-[#6c8b64]" />
        <span className="h-3 w-5 border border-[#557050] bg-[#6c8b64]" />
        <span className="h-3 w-5 border border-[#557050] bg-[#6c8b64]" />
      </div>
      <div className="ml-2.5 flex min-w-0 gap-1.5">
        {TASKS.map((t) => (
          <button
            key={t.text}
            type="button"
            className={
              t.on
                ? "flex h-[22px] w-24 items-center gap-1 rounded-sm border border-[#e3ebe1] bg-linear-to-b from-[#c3d1bf] to-[#d9e3d6] pl-1 text-[#222]"
                : "flex h-[22px] w-24 items-center gap-px rounded-sm border border-[#a5b89f] bg-[#7f9b78]/70 pl-1 text-[#0e160c]"
            }
          >
            {t.icon}
            <span
              className={
                t.full
                  ? "whitespace-nowrap"
                  : "grow text-left whitespace-nowrap [mask-image:linear-gradient(90deg,#000_55%,transparent_98%)]"
              }
            >
              {t.text}
            </span>
          </button>
        ))}
      </div>
      <button type="button" aria-label="Show hidden icons" className="ml-3.5 flex size-4 items-center justify-center rounded-full border border-[#a9bda4]">
        <svg viewBox="0 0 8 8" width="8" height="8" aria-hidden="true">
          <path d="M6 0v8L1 4z" fill="#fff" />
        </svg>
      </button>
      <div className="flex h-full grow items-center bg-linear-to-b from-[#c5d9c6] via-[#b3ccb4] to-[#c9dac8] pl-4">
        <div className="flex items-center gap-[5px]">
          {TRAY.map((t, i) => (
            <svg key={i} viewBox="0 0 22 22" width="23" height="22" aria-hidden="true">
              {t}
            </svg>
          ))}
        </div>
        <svg viewBox="0 0 20 22" width="20" height="22" className="ml-[11px]" aria-hidden="true">
          <path d="M9 3h3V1h4v2h3v18H9z" fill="#e8f5d8" stroke="#677" />
          <path d="M10 6h8v3h-8zM10 11h8v3h-8zM10 16h8v4h-8z" fill="#5fba2c" />
          <path d="M10 4L1 13h5l-3 8 9-11H7z" fill="#f3b81c" stroke="#c98a0c" strokeWidth=".6" />
        </svg>
        <svg viewBox="0 0 20 20" width="20" height="20" className="ml-3" aria-hidden="true">
          <circle cx="10" cy="10" r="9.500" fill="#8e948e" />
          <path d="M9 8.500h2.500V16H9zM9 4h2.500v2.500H9z" fill="#e9ece9" />
        </svg>
        <time className="ml-2 w-[58px] text-[21px] leading-none text-[#111]">23:12</time>
        <svg viewBox="0 0 20 20" width="20" height="20" className="ml-1" aria-hidden="true">
          <rect x=".5" y=".5" width="19" height="19" rx="2" fill="#3d68a8" stroke="#274878" />
          <path d="M4 14V9a6 6 0 0112 0v5z" fill="#fff" />
          <path d="M8 11c0-3 4-3 4 0z" fill="#3d68a8" />
        </svg>
        <svg viewBox="0 0 20 20" width="20" height="20" className="ml-[5px]" aria-hidden="true">
          <rect x=".5" y=".5" width="19" height="19" rx="2" fill="#cf2a24" stroke="#8e1410" />
          <path d="M6 6a5.500 5.500 0 108 0M10 3v7" fill="none" stroke="#fff" strokeWidth="2.400" />
        </svg>
        <svg viewBox="0 0 18 24" width="18" height="24" className="ml-1.5" aria-hidden="true">
          <circle cx="13" cy="12" r="12" fill="#c9d8c9" stroke="#eef4ee" />
          <path d="M16 7c-6-2-10 4-5 8 2 2 5 2 7 1" fill="none" stroke="#8fa391" strokeWidth="2.500" />
        </svg>
      </div>
    </footer>
  );
}

/* ---------- console ---------- */

const ScrollBtn = ({ up }: { up?: boolean }) => (
  <button
    type="button"
    aria-label={up ? "Scroll up" : "Scroll down"}
    className="flex h-[15px] w-4 items-center justify-center border border-t-white border-r-[#333] border-b-[#333] border-l-white bg-[#d6d6d6]"
  >
    <svg viewBox="0 0 9 9" width="9" height="9" aria-hidden="true" className={up ? "" : "rotate-180"}>
      <path d="M4.500.5l4 4H6v4H3v-4H.5z" fill="#666" stroke="#000" />
    </svg>
  </button>
);

function Console() {
  return (
    <section className="flex h-[83px] shrink-0 flex-col border-t border-black">
      <DockHeader title="Python Console" />
      <div className="mt-px flex min-h-0 grow border-t-2 border-r border-b border-l-2 border-t-[#222] border-r-[#e6e6e6] border-b-[#e0e0e0] border-l-[#555] bg-white">
        <pre className="grow overflow-hidden pt-[5px] pl-1 font-['Liberation_Sans',sans-serif] text-base leading-[21px]">
          {"Python 2.4.4 (#1, Nov 12 2009, 16:17:33)\n[GCC 4.2.2 20071128 (prerelease) (4.2.2-3.1mdv2008.0)] on linux2\ntype help to get general information on environment"}
        </pre>
        <div className="flex w-4 shrink-0 flex-col bg-[#efefef]">
          <ScrollBtn up />
          <div className="h-[15px] border border-t-white border-r-[#aaa] border-b-[#aaa] border-l-white bg-[#f4f4f4] bg-[radial-gradient(#888_1px,transparent_1px)] bg-[size:3px_3px]" />
          <div className="grow" />
          <ScrollBtn />
        </div>
      </div>
    </section>
  );
}

/* ---------- app ---------- */

const MENU: [string, string, string][] = [
  ["", "F", "ile"],
  ["", "E", "dit"],
  ["", "V", "iew"],
  ["Mesh", "", ""],
  ["Controls", "", ""],
  ["Modification", "", ""],
  ["", "T", "ools"],
  ["", "W", "indow"],
  ["", "H", "elp"],
];

export default function App() {
  return (
    <div className="flex h-screen flex-col overflow-hidden bg-[#e6e6e6] font-['Liberation_Sans',Arial,sans-serif] text-[13px] leading-4 text-black">
      <header className="flex h-5 shrink-0 items-center gap-[7px] bg-[linear-gradient(90deg,#e4e4e4_20%,#f6f6f6_50%,#e4e4e4_75%)] px-[3px] text-[11px]">
        <Eagle />
        <RoundBtn kind="dot" dim />
        <h1 className="grow text-center text-[#7b7b7b]">SALOME 5.1.5 - [Study1]</h1>
        <RoundBtn kind="down" dim />
        <RoundBtn kind="max" dim />
        <RoundBtn kind="close" dim />
      </header>
      <nav className="flex h-[21px] shrink-0 items-center gap-3 bg-linear-to-b from-white to-[#e9e9e9] pr-0.5 pb-0.5 pl-1.5">
        {MENU.map(([a, k, b]) => (
          <button key={a + k} type="button">
            {a}
            {k && <K>{k}</K>}
            {b}
          </button>
        ))}
        <span className="ml-auto text-[14px] font-black whitespace-nowrap text-[#5c6c82] [text-shadow:1px_1px_1px_#333]">SALOME 5</span>
      </nav>
      <div className="flex h-[34px] shrink-0 overflow-hidden border-t border-b border-t-white border-b-black bg-linear-to-b from-white to-[#e4e4e4]">
        <Grip />
        <Tools names={["newDoc", "open", "save", "del"]} />
        <Sep />
        <Tools names={["copy", "paste"]} />
        <Grip />
        <div className="relative my-[3px] flex h-[22px] w-[113px] shrink-0 border border-t-[#a5a5a5] border-r-[#3c3c3c] border-b-[#3c3c3c] border-l-[#a5a5a5] bg-linear-to-b from-[#cfcfcf] to-white to-50%">
          <select aria-label="Module" className="size-full appearance-none pl-5">
            <option>Mesh</option>
          </select>
          <span className="pointer-events-none absolute top-1 left-1">
            <Svg size={13}>{I.meshMod}</Svg>
          </span>
          <span className="pointer-events-none absolute inset-y-0 right-0 flex w-5 items-center justify-center border-l border-[#777] bg-linear-to-b from-[#fafafa] to-[#bdbdbd]">
            <svg viewBox="0 0 13 13" width="13" height="13" aria-hidden="true">
              <path d="M4.500.5h4v6h4l-6 6-6-6h4z" fill="#666" stroke="#000" />
            </svg>
          </span>
        </div>
        <Tools names={["geom"]} />
        <Tool name="meshMod" on />
        <Tools names={["post", "med", "tree"]} />
        <Grip />
        <Tools names={["meshNew", "meshAdd", "meshEdit", "meshCopy"]} />
        <Sep />
        <Tools names={["gear", "gearLens", "gear", "gear"]} />
        <Sep />
        <Tools names={["grp", "grpMulti", "grpNew", "grpEdit"]} />
        <Sep />
        <Tools names={["docA", "docS", "help", "search"]} />
        <Grip />
        <Tools names={["length", "triGreen", "triBlack"]} />
        <Sep />
        <Tools names={["node", "triYellow"]} />
        <More wide />
        <Grip />
        <Tools names={["dot"]} />
        <More />
        <Grip />
        <Tools names={["move"]} />
        <More />
        <Grip />
        <Tools names={["refresh"]} />
      </div>
      <main className="flex min-h-0 grow">
        <ObjectBrowser />
        <div className="flex w-[5px] shrink-0 flex-col items-center justify-center">
          <div className="h-[15px] w-[3px] bg-[repeating-linear-gradient(#999_0_1px,transparent_1px_3px)]" />
        </div>
        <Viewer />
      </main>
      <div className="flex h-[5px] shrink-0 items-center justify-center">
        <div className="h-[3px] w-[15px] bg-[repeating-linear-gradient(90deg,#999_0_1px,transparent_1px_3px)]" />
      </div>
      <Console />
      <div className="h-[23px] shrink-0" />
      <TaskBar />
    </div>
  );
}
